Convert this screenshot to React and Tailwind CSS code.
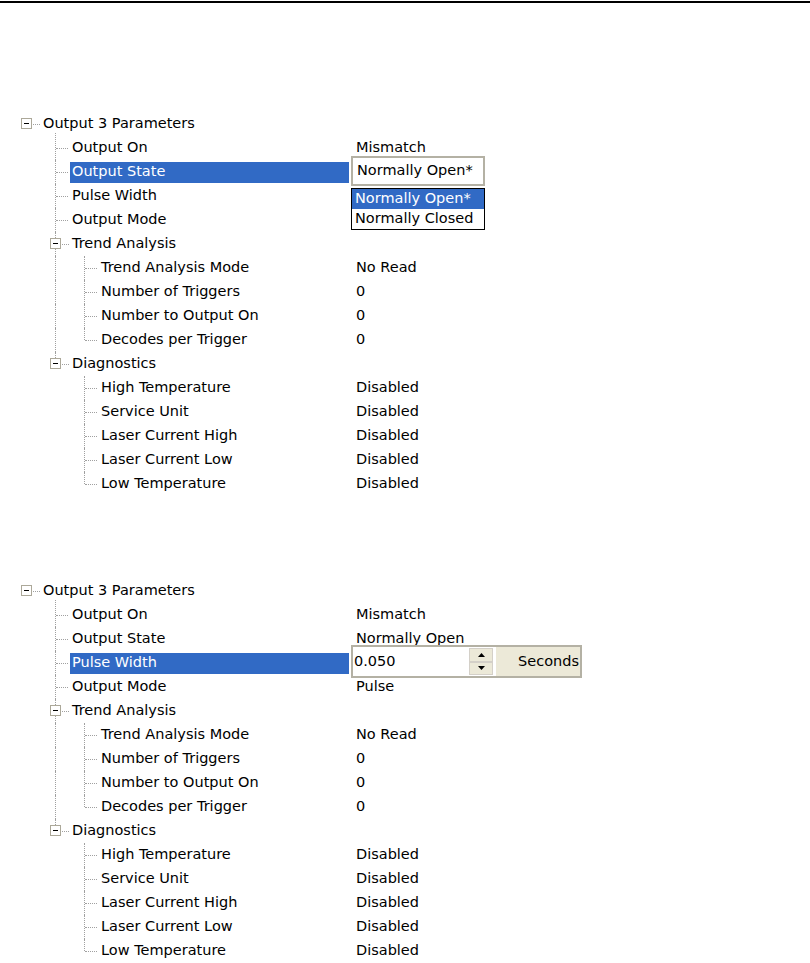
import React from 'react'

const tree = [
  { label: 'Output 3 Parameters', level: 0, box: true },
  { label: 'Output On', level: 1, value: 'Mismatch', first: true },
  { label: 'Output State', level: 1, value: 'Normally Open' },
  { label: 'Pulse Width', level: 1, value: '0.050' },
  { label: 'Output Mode', level: 1, value: 'Pulse' },
  { label: 'Trend Analysis', level: 1, box: true },
  { label: 'Trend Analysis Mode', level: 2, value: 'No Read', outer: true },
  { label: 'Number of Triggers', level: 2, value: '0', outer: true },
  { label: 'Number to Output On', level: 2, value: '0', outer: true },
  { label: 'Decodes per Trigger', level: 2, value: '0', outer: true, last: true },
  { label: 'Diagnostics', level: 1, box: true, last: true },
  { label: 'High Temperature', level: 2, value: 'Disabled' },
  { label: 'Service Unit', level: 2, value: 'Disabled' },
  { label: 'Laser Current High', level: 2, value: 'Disabled' },
  { label: 'Laser Current Low', level: 2, value: 'Disabled' },
  { label: 'Low Temperature', level: 2, value: 'Disabled', last: true },
]

function Guide({ vertical, half, branch, box, first }) {
  return (
    <div className="relative w-[29px] h-full shrink-0">
      {vertical && (
        <div
          className={`absolute left-[14px] border-l border-dotted border-[#a0a0a0] ${first ? 'top-[-3px]' : 'top-0'} ${half ? 'h-1/2' : 'bottom-0'}`}
        />
      )}
      {branch && !box && (
        <div className="absolute left-[15px] right-[2px] top-1/2 border-t border-dotted border-[#a0a0a0]" />
      )}
      {box && (
        <>
          <div className="absolute left-[21px] right-[1px] top-1/2 border-t border-dotted border-[#a0a0a0]" />
          <div className="absolute left-[9px] top-[6px] w-[11px] h-[11px] border border-[#aca899] bg-white flex items-center justify-center">
            <div className="w-[5px] h-px bg-black" />
          </div>
        </>
      )}
    </div>
  )
}

function Combo() {
  return (
    <>
      <div className="absolute left-[2px] top-[-4px] w-[134px] h-[30px] border-2 border-[#b4b1a4] bg-white flex items-center pl-[4px]">
        Normally Open*
      </div>
      <div className="absolute left-[2px] top-[28px] w-[134px] border border-black bg-white z-10">
        <div className="h-[20px] flex items-center pl-[3px] bg-[#316ac5] text-white">Normally Open*</div>
        <div className="h-[20px] flex items-center pl-[3px]">Normally Closed</div>
      </div>
    </>
  )
}

function Spinner() {
  return (
    <div className="absolute left-[2px] top-[-6px] w-[231px] h-[33px] border-2 border-[#b4b1a4] bg-white flex z-10">
      <div className="flex-1 flex items-center pl-[1px]">0.050</div>
      <div className="w-[24px] flex flex-col py-[1px] mr-[3px]">
        <div className="flex-1 bg-[#ece9d8] border border-[#d4d0c8] flex items-center justify-center">
          <svg width="7" height="4" viewBox="0 0 7 4"><path d="M3.5 0 L7 4 L0 4 Z" fill="#000" /></svg>
        </div>
        <div className="flex-1 bg-[#ece9d8] border border-[#d4d0c8] flex items-center justify-center">
          <svg width="7" height="4" viewBox="0 0 7 4"><path d="M0 0 L7 0 L3.5 4 Z" fill="#000" /></svg>
        </div>
      </div>
      <div className="w-[84px] bg-[#ece9d8] flex items-center justify-end pr-[1px]">Seconds</div>
    </div>
  )
}

function Tree({ selected, overlay, values }) {
  return (
    <div className="flex flex-col">
      {tree.map((row, i) => {
        const cells = []
        if (row.level === 0) {
          cells.push(<Guide key="g0" box />)
        } else if (row.level === 1) {
          cells.push(<Guide key="g0" />)
          cells.push(<Guide key="g1" vertical half={row.last} branch box={row.box} first={row.first} />)
        } else {
          cells.push(<Guide key="g0" />)
          cells.push(<Guide key="g1" vertical={row.outer} />)
          cells.push(<Guide key="g2" vertical half={row.last} branch />)
        }
        const isSel = row.label === selected
        const value = values[row.label] ?? row.value
        return (
          <div key={i} className="h-[24px] flex">
            <div className="w-[349px] pl-[12px] flex items-center h-full shrink-0">
              {cells}
              <div
                className={`flex-1 h-[21px] flex items-center pl-[2px] ${isSel ? 'bg-[#316ac5] text-white' : ''}`}
              >
                {row.label}
              </div>
            </div>
            <div className="relative flex-1 h-full flex items-center pl-[7px]">
              {isSel ? overlay : value}
            </div>
          </div>
        )
      })}
    </div>
  )
}

export default function App() {
  return (
    <div className="w-[810px] h-[963px] bg-white text-black text-[14.5px] overflow-hidden" style={{ fontFamily: '"DejaVu Sans", sans-serif' }}>
      <div className="mt-px h-[2px] bg-black" />
      <div className="mt-[109px]">
        <Tree selected="Output State" overlay={<Combo />} values={{ 'Pulse Width': '', 'Output Mode': '' }} />
      </div>
      <div className="mt-[83px]">
        <Tree selected="Pulse Width" overlay={<Spinner />} values={{}} />
      </div>
    </div>
  )
}
